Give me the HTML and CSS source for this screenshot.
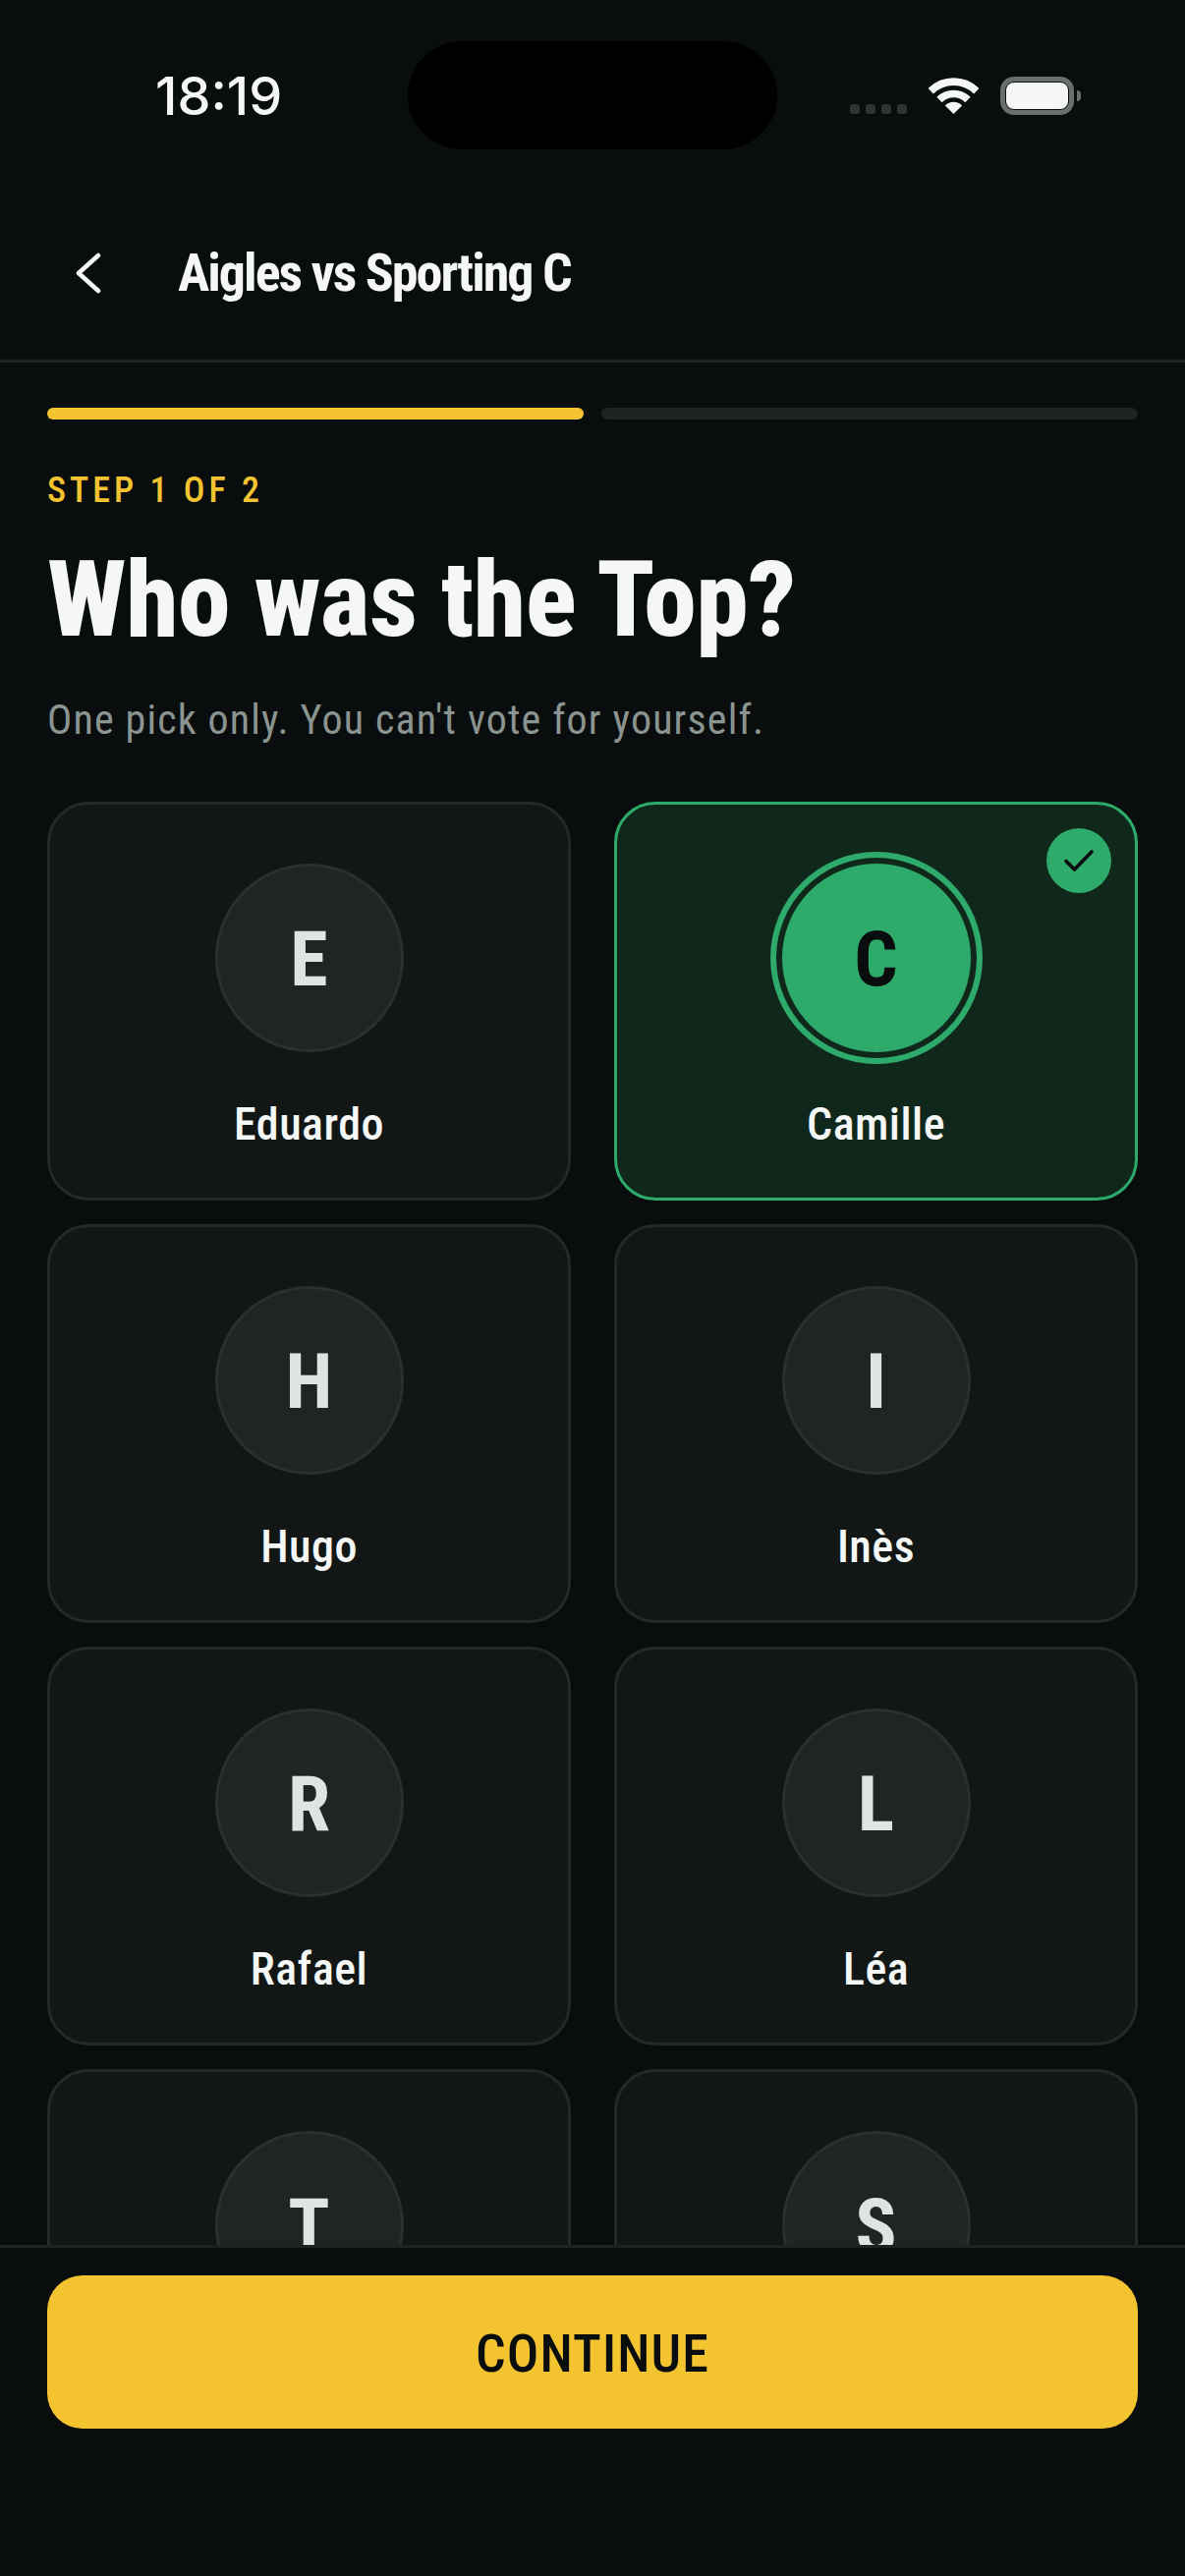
FILE: index.html
```html
<!DOCTYPE html>
<html lang="en">
<head>
<meta charset="utf-8">
<title>Who was the Top?</title>
<link rel="stylesheet" href="styles.css">
</head>
<body>
<div class="screen">
  <div class="status">
    <span class="time">18:19</span>
    <div class="island"></div>
    <div class="sys">
      <div class="signal"><i></i><i></i><i></i><i></i></div>
      <svg class="wifi" width="51" height="37" viewBox="0 0 51 37"><path d="M2.2 13.7a33 33 0 0 1 46.6 0" fill="none" stroke="#f5f7f6" stroke-width="7.7"/><path d="M11 22.5a20.5 20.5 0 0 1 29 0" fill="none" stroke="#f5f7f6" stroke-width="7.6"/><path d="M25.5 37l-8.6-8.6a12.2 12.2 0 0 1 17.2 0z" fill="#f5f7f6"/></svg>
      <div class="battery"><div class="battery-fill"></div><div class="battery-nub"></div></div>
    </div>
  </div>
  <header class="nav">
    <svg class="back" width="26" height="42" viewBox="0 0 26 42"><path d="M23 3L3 21l20 18" fill="none" stroke="#f5f7f6" stroke-width="4.5" stroke-linecap="round" stroke-linejoin="round"/></svg>
    <h2 class="nav-title">Aigles vs Sporting C</h2>
  </header>
  <main class="content">
    <div class="progress"><div class="seg seg-on"></div><div class="seg"></div></div>
    <div class="step">STEP 1 OF 2</div>
    <h1 class="headline">Who was the Top?</h1>
    <p class="sub">One pick only. You can't vote for yourself.</p>
    <div class="grid">
      <div class="card"><div class="avatar">E</div><div class="name">Eduardo</div></div>
      <div class="card card-selected">
        <div class="badge"><svg width="32" height="24" viewBox="0 0 32 24"><path d="M3 12.5l8.5 8.5L29 3" fill="none" stroke="#0a0d0d" stroke-width="3.6" stroke-linecap="round" stroke-linejoin="round"/></svg></div>
        <div class="avatar avatar-selected">C</div><div class="name">Camille</div>
      </div>
      <div class="card"><div class="avatar">H</div><div class="name">Hugo</div></div>
      <div class="card"><div class="avatar">I</div><div class="name">Inès</div></div>
      <div class="card"><div class="avatar">R</div><div class="name">Rafael</div></div>
      <div class="card"><div class="avatar">L</div><div class="name">Léa</div></div>
      <div class="card"><div class="avatar">T</div><div class="name">Théo</div></div>
      <div class="card"><div class="avatar">S</div><div class="name">Sarah</div></div>
    </div>
  </main>
  <footer class="footer"><button class="cta">CONTINUE</button></footer>
</div>
</body>
</html>
```

FILE: styles.css
```css
* { box-sizing: border-box; margin: 0; padding: 0; }
html, body { background: #0a0d0d; }
body { font-family: Roboto, "Liberation Sans", sans-serif; color: #f5f7f6; }
.screen { width: 1206px; height: 2622px; display: flex; flex-direction: column; overflow: hidden; }
.status { height: 152px; padding: 42px 0 0 158px; display: flex; align-items: flex-start; flex: none; }
.time { font-family: Inter, sans-serif; font-weight: 500; font-size: 54px; line-height: 62px; width: 257px; margin-top: 25px; }
.island { width: 376px; height: 110px; border-radius: 55px; background: #000; }
.sys { margin: 36px 0 0 74px; display: flex; align-items: flex-end; height: 39px; }
.signal { display: flex; gap: 6px; margin-bottom: 1px; }
.signal i { width: 10px; height: 10px; border-radius: 3px; background: #2c3331; }
.wifi { margin: 0 22px 1px 22px; }
.battery { position: relative; width: 75px; height: 39px; border: 5px solid #6a6e6c; border-radius: 14px; padding: 1px; }
.battery-fill { width: 100%; height: 100%; background: #f5f7f6; border-radius: 8px; }
.battery-nub { position: absolute; left: 73px; top: 9px; width: 4px; height: 11px; background: #6a6e6c; border-radius: 0 4px 4px 0; }
.nav { height: 217px; flex: none; display: flex; align-items: center; padding: 38px 0 0 77px; border-bottom: 3px solid #1d2321; }
.back { margin-right: 78px; }
.nav-title { font-size: 54px; font-weight: 700; font-stretch: 75%; line-height: 64px; letter-spacing: -2px; }
.content { flex: 1; min-height: 0; overflow: hidden; padding: 46px 48px 0; }
.progress { display: flex; gap: 18px; }
.seg { flex: 1; height: 12px; border-radius: 6px; background: #1d2321; }
.seg-on { background: #f4c430; }
.step { margin-top: 48px; color: #f4c430; font-size: 36px; font-weight: 500; font-stretch: 75%; line-height: 48px; letter-spacing: 4px; }
.headline { margin-top: 22px; font-size: 108px; font-weight: 800; font-stretch: 75%; line-height: 130px; letter-spacing: -0.5px; }
.sub { margin-top: 30px; font-size: 42px; font-weight: 400; font-stretch: 85%; line-height: 56px; color: #8a9490; letter-spacing: 1.15px; }
.grid { margin-top: 55px; display: grid; grid-template-columns: 1fr 1fr; column-gap: 44px; row-gap: 24px; }
.card { position: relative; height: 406px; background: #121716; border: 3px solid #222a28; border-radius: 42px; padding-top: 60px; display: flex; flex-direction: column; align-items: center; }
.card-selected { background: #10281c; border-color: #2eaa6a; }
.avatar { width: 192px; height: 192px; border-radius: 50%; background: #1f2523; border: 3px solid #2a302e; padding-top: 3px; display: flex; align-items: center; justify-content: center; font-size: 78px; font-weight: 700; font-stretch: 75%; color: #dfe3e1; }
.avatar-selected { background: #2eaa6a; border-color: #2eaa6a; color: #0a0d0d; box-shadow: 0 0 0 6px #10281c, 0 0 0 12px #2eaa6a; }
.name { margin-top: 45px; font-size: 46px; font-weight: 500; font-stretch: 75%; line-height: 56px; color: #f5f7f6; letter-spacing: 0.5px; }
.badge { position: absolute; top: 24px; right: 24px; width: 66px; height: 66px; border-radius: 50%; background: #2eaa6a; display: flex; align-items: center; justify-content: center; }
.footer { height: 337px; flex: none; background: #0a0d0d; border-top: 3px solid #1d2321; padding: 28px 48px 0; }
.cta { width: 100%; height: 156px; border: 0; border-radius: 36px; background: #f4c430; color: #0a0d0d; font-family: Roboto, sans-serif; font-size: 54px; font-weight: 500; font-stretch: 75%; letter-spacing: 1.1px; padding-top: 2px; }
```
